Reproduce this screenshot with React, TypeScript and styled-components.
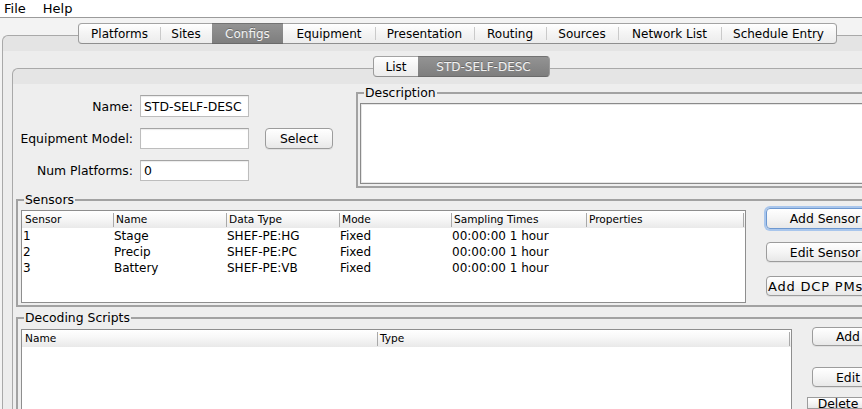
import React from "react";
import styled, { createGlobalStyle } from "styled-components";

const Global = createGlobalStyle`
  html, body { margin: 0; padding: 0; background: #f3f3f3; overflow: hidden; }
  body { font-family: "DejaVu Sans", "Liberation Sans", sans-serif; font-size: 12px; color: #000; }
  #root { width: 862px; height: 409px; overflow: hidden; }
`;

const Window = styled.div`
  width: 862px;
  height: 409px;
  overflow: hidden;
  display: flex;
  flex-direction: column;
  background: #f3f3f3;
`;

const MenuBar = styled.div`
  flex: none;
  height: 17px;
  background: #fff;
  border-bottom: 1px solid #9b9b9b;
  display: flex;
  align-items: center;
  padding-left: 4px;
  gap: 17px;
  font-size: 13px;
`;

const MenuItem = styled.span`
  line-height: 17px;
`;

const TabStrip = styled.div<{ $left: number; $top: number }>`
  flex: none;
  display: flex;
  height: 21px;
  margin: ${(p) => p.$top}px 0 0 ${(p) => p.$left}px;
  position: relative;
  z-index: 1;
`;

const Tab = styled.div<{ $w: number; $sel?: boolean; $first?: boolean; $last?: boolean; $sep?: boolean }>`
  box-sizing: border-box;
  width: ${(p) => p.$w}px;
  height: 21px;
  display: flex;
  align-items: center;
  justify-content: center;
  font-size: 12px;
  white-space: nowrap;
  position: relative;
  border-top: 1px solid ${(p) => (p.$sel ? "#727272" : "#a3a3a3")};
  border-bottom: 1px solid ${(p) => (p.$sel ? "#6a6a6a" : "#8f8f8f")};
  border-left: ${(p) => (p.$first ? "1px solid #9c9c9c" : "none")};
  border-right: ${(p) => (p.$last ? "1px solid #9c9c9c" : "none")};
  border-radius: ${(p) => (p.$first ? "4px 0 0 4px" : p.$last ? "0 4px 4px 0" : "0")};
  background: ${(p) =>
    p.$sel ? "linear-gradient(#939393, #7e7e7e)" : "linear-gradient(#ffffff, #f4f4f4 50%, #ececec)"};
  color: ${(p) => (p.$sel ? "#f2f2f2" : "#000")};
  text-shadow: ${(p) => (p.$sel ? "0 -1px 0 rgba(0,0,0,0.25)" : "none")};
  &::before {
    content: ${(p) => (p.$sep ? "''" : "none")};
    position: absolute;
    left: 0;
    top: 3px;
    bottom: 3px;
    width: 1px;
    background: #cacaca;
  }
`;

const OuterPanel = styled.div`
  flex: 1;
  min-height: 0;
  margin: -9px 0 0 2px;
  border: 1px solid #a9a9a9;
  border-right: none;
  border-bottom: none;
  border-radius: 6px 0 0 0;
  background: linear-gradient(#e4e4e4 0, #e4e4e4 15px, #ededed 15px);
  display: flex;
  flex-direction: column;
`;

const InnerPanel = styled.div`
  flex: 1;
  min-height: 0;
  width: 900px;
  margin: -9px 0 0 9px;
  border: 1px solid #a9a9a9;
  border-right: none;
  border-bottom: none;
  border-radius: 6px 0 0 0;
  background: linear-gradient(#e5e5e5 0, #e5e5e5 15px, #eeeeee 15px);
  display: flex;
  flex-direction: column;
`;

const TopSection = styled.div`
  display: flex;
  height: 119px;
  flex: none;
`;

const Form = styled.div`
  width: 343px;
  flex: none;
  padding-top: 26px;
  display: grid;
  grid-template-columns: 120px 109px 77px;
  grid-template-rows: 22px 21px 21px;
  column-gap: 7px;
  row-gap: 11px;
  align-content: start;
  align-items: center;
`;

const Label = styled.div`
  font-size: 12.4px;
  text-align: right;
  white-space: nowrap;
`;

const Field = styled.div`
  box-sizing: border-box;
  height: 100%;
  background: #fff;
  border: 1px solid #bdbdbd;
  border-top-color: #a4a4a4;
  box-shadow: inset 0 1px 1px rgba(0, 0, 0, 0.08);
  padding: 0 3px;
  font-size: 12.4px;
  display: flex;
  align-items: center;
  white-space: nowrap;
  overflow: hidden;
`;

const Group = styled.fieldset<{ $w: number; $ml: number; $mt: number }>`
  box-sizing: border-box;
  width: ${(p) => p.$w}px;
  margin: ${(p) => p.$mt}px 0 0 ${(p) => p.$ml}px;
  padding: 0 2px;
  border: 2px solid #a2a2a2;
  min-width: 0;
  flex: none;
`;

const Legend = styled.legend`
  font-size: 12.4px;
  line-height: 14px;
  padding: 0 1px;
  margin-left: 4px;
`;

const TextArea = styled.div`
  box-sizing: border-box;
  height: 81px;
  margin: 3px 0 2px 0;
  background: #fff;
  border: 1px solid #8a8a8a;
  box-shadow: inset 0 0 0 1px #e6e6e6;
`;

const GroupBody = styled.div`
  display: flex;
  align-items: flex-start;
`;

const Table = styled.div<{ $w: number; $h: number; $mt: number }>`
  box-sizing: border-box;
  width: ${(p) => p.$w}px;
  height: ${(p) => p.$h}px;
  margin: ${(p) => p.$mt}px 0 2px 1px;
  border: 1px solid #8e8e8e;
  background: #fff;
  flex: none;
  overflow: hidden;
`;

const HeaderRow = styled.div<{ $cols: string }>`
  display: grid;
  grid-template-columns: ${(p) => p.$cols};
  height: 17px;
  background: linear-gradient(#ffffff, #f7f7f7 45%, #e9e9e9);
`;

const HeaderCell = styled.div<{ $sep?: boolean }>`
  position: relative;
  font-size: 10.6px;
  line-height: 17px;
  padding-left: 3px;
  white-space: nowrap;
  overflow: hidden;
  &::before {
    content: ${(p) => (p.$sep ? "''" : "none")};
    position: absolute;
    left: 0;
    top: 2px;
    bottom: 1px;
    width: 1px;
    background: #a9a9a9;
  }
`;

const Row = styled.div<{ $cols: string }>`
  display: grid;
  grid-template-columns: ${(p) => p.$cols};
  height: 16px;
`;

const Cell = styled.div`
  font-size: 12px;
  line-height: 17px;
  padding-left: 1px;
  white-space: nowrap;
  overflow: hidden;
`;

const ButtonColumn = styled.div<{ $ml: number }>`
  display: flex;
  flex-direction: column;
  margin-left: ${(p) => p.$ml}px;
  flex: none;
`;

const Button = styled.div<{
  $w: number;
  $h: number;
  $mt?: number;
  $ml?: number;
  $focus?: boolean;
  $left?: boolean;
  $squished?: boolean;
  $end?: boolean;
}>`
  box-sizing: border-box;
  width: ${(p) => p.$w}px;
  height: ${(p) => p.$h}px;
  margin-top: ${(p) => p.$mt ?? 0}px;
  margin-left: ${(p) => p.$ml ?? 0}px;
  justify-self: ${(p) => (p.$end ? "end" : "auto")};
  border: 1px solid ${(p) => (p.$focus ? "#6d98d0" : "#9c9c9c")};
  border-radius: ${(p) => (p.$squished ? "0" : "4px")};
  background: linear-gradient(#ffffff, #f5f5f5 50%, #e8e8e8);
  box-shadow: ${(p) => (p.$focus ? "0 0 0 2px #a9c6ec" : "0 1px 0 rgba(0,0,0,0.06)")};
  font-size: ${(p) => (p.$left ? "13px" : "12.4px")};
  letter-spacing: ${(p) => (p.$left ? "0.8px" : "normal")};
  line-height: ${(p) => (p.$squished ? "12px" : "normal")};
  display: flex;
  align-items: ${(p) => (p.$squished ? "flex-start" : "center")};
  justify-content: ${(p) => (p.$left ? "flex-start" : "center")};
  padding: ${(p) => (p.$left ? "0 0 0 1px" : "0")};
  white-space: nowrap;
  overflow: hidden;
  flex: none;
`;

const mainTabs: { label: string; w: number }[] = [
  { label: "Platforms", w: 82 },
  { label: "Sites", w: 52 },
  { label: "Configs", w: 71 },
  { label: "Equipment", w: 92 },
  { label: "Presentation", w: 99 },
  { label: "Routing", w: 72 },
  { label: "Sources", w: 72 },
  { label: "Network List", w: 103 },
  { label: "Schedule Entry", w: 116 },
];

const subTabs: { label: string; w: number }[] = [
  { label: "List", w: 45 },
  { label: "STD-SELF-DESC", w: 132 },
];

const sensorCols = "91px 113px 113px 112px 135px 157px 1fr";
const sensorHeaders = ["Sensor", "Name", "Data Type", "Mode", "Sampling Times", "Properties", ""];
const sensors = [
  ["1", "Stage", "SHEF-PE:HG", "Fixed", "00:00:00 1 hour", ""],
  ["2", "Precip", "SHEF-PE:PC", "Fixed", "00:00:00 1 hour", ""],
  ["3", "Battery", "SHEF-PE:VB", "Fixed", "00:00:00 1 hour", ""],
];

const scriptCols = "355px 412px 1fr";
const scriptHeaders = ["Name", "Type", ""];

function Tabs({ tabs, selected, left, top }: { tabs: { label: string; w: number }[]; selected: number; left: number; top: number }) {
  return (
    <TabStrip $left={left} $top={top}>
      {tabs.map((t, i) => (
        <Tab
          key={t.label}
          $w={t.w}
          $sel={i === selected}
          $first={i === 0}
          $last={i === tabs.length - 1}
          $sep={i > 0 && i !== selected && i - 1 !== selected}
        >
          {t.label}
        </Tab>
      ))}
    </TabStrip>
  );
}

export default function App() {
  return (
    <>
      <Global />
      <Window>
        <MenuBar>
          <MenuItem>File</MenuItem>
          <MenuItem>Help</MenuItem>
        </MenuBar>
        <Tabs tabs={mainTabs} selected={2} left={78} top={5} />
        <OuterPanel>
          <Tabs tabs={subTabs} selected={1} left={370} top={20} />
          <InnerPanel>
            <TopSection>
              <Form>
                <Label>Name:</Label>
                <Field>STD-SELF-DESC</Field>
                <span />
                <Label>Equipment Model:</Label>
                <Field />
                <Button $w={68} $h={21} $end>Select</Button>
                <Label>Num Platforms:</Label>
                <Field>0</Field>
                <span />
              </Form>
              <Group $w={530} $ml={0} $mt={17}>
                <Legend>Description</Legend>
                <TextArea />
              </Group>
            </TopSection>

            <Group $w={880} $ml={3} $mt={5}>
              <Legend>Sensors</Legend>
              <GroupBody>
                <Table $w={725} $h={93} $mt={3}>
                  <HeaderRow $cols={sensorCols}>
                    {sensorHeaders.map((h, i) => (
                      <HeaderCell key={i} $sep={i > 0}>{h}</HeaderCell>
                    ))}
                  </HeaderRow>
                  {sensors.map((r) => (
                    <Row key={r[0]} $cols={sensorCols}>
                      {r.map((c, i) => (
                        <Cell key={i}>{c}</Cell>
                      ))}
                    </Row>
                  ))}
                </Table>
                <ButtonColumn $ml={20}>
                  <Button $w={118} $h={21} $mt={1} $focus>Add Sensor</Button>
                  <Button $w={118} $h={20} $mt={13}>Edit Sensor</Button>
                  <Button $w={118} $h={20} $mt={14} $left>Add DCP PMs</Button>
                </ButtonColumn>
              </GroupBody>
            </Group>

            <Group $w={880} $ml={3} $mt={4}>
              <Legend>Decoding Scripts</Legend>
              <GroupBody>
                <Table $w={771} $h={100} $mt={4}>
                  <HeaderRow $cols={scriptCols}>
                    {scriptHeaders.map((h, i) => (
                      <HeaderCell key={i} $sep={i > 0}>{h}</HeaderCell>
                    ))}
                  </HeaderRow>
                </Table>
                <ButtonColumn $ml={20}>
                  <Button $w={72} $h={19} $mt={2}>Add</Button>
                  <Button $w={72} $h={20} $mt={21}>Edit</Button>
                  <Button $w={62} $h={12} $mt={10} $ml={-5} $squished>Delete</Button>
                </ButtonColumn>
              </GroupBody>
            </Group>
          </InnerPanel>
        </OuterPanel>
      </Window>
    </>
  );
}
